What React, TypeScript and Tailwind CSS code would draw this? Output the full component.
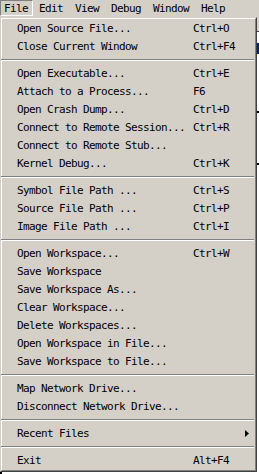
import React from 'react';

type Item = { label: string; shortcut?: string; submenu?: boolean } | 'sep';

const items: Item[] = [
  { label: 'Open Source File...', shortcut: 'Ctrl+O' },
  { label: 'Close Current Window', shortcut: 'Ctrl+F4' },
  'sep',
  { label: 'Open Executable...', shortcut: 'Ctrl+E' },
  { label: 'Attach to a Process...', shortcut: 'F6' },
  { label: 'Open Crash Dump...', shortcut: 'Ctrl+D' },
  { label: 'Connect to Remote Session...', shortcut: 'Ctrl+R' },
  { label: 'Connect to Remote Stub...' },
  { label: 'Kernel Debug...', shortcut: 'Ctrl+K' },
  'sep',
  { label: 'Symbol File Path ...', shortcut: 'Ctrl+S' },
  { label: 'Source File Path ...', shortcut: 'Ctrl+P' },
  { label: 'Image File Path ...', shortcut: 'Ctrl+I' },
  'sep',
  { label: 'Open Workspace...', shortcut: 'Ctrl+W' },
  { label: 'Save Workspace' },
  { label: 'Save Workspace As...' },
  { label: 'Clear Workspace...' },
  { label: 'Delete Workspaces...' },
  { label: 'Open Workspace in File...' },
  { label: 'Save Workspace to File...' },
  'sep',
  { label: 'Map Network Drive...' },
  { label: 'Disconnect Network Drive...' },
  'sep',
  { label: 'Recent Files', submenu: true },
  'sep',
  { label: 'Exit', shortcut: 'Alt+F4' },
];

const menus = ['Edit', 'View', 'Debug', 'Window', 'Help'];

export default function App() {
  return (
    <div className="w-[259px] h-[474px] overflow-hidden bg-white font-['DejaVu_Sans_Mono',monospace] text-[11px] tracking-[-0.62px] text-black leading-none">
      {/* Menu bar */}
      <div className="flex h-[17px] bg-[#d4d0c8]">
        <div className="flex items-center w-[33px] h-[16px] pl-[3px] border-t border-l border-r border-b border-t-[#808080] border-l-[#808080] border-r-white border-b-white">
          File
        </div>
        {menus.map((m) => (
          <div key={m} className="flex items-center h-[16px] px-[6px]">
            {m}
          </div>
        ))}
      </div>

      <div className="flex">
        {/* Dropdown */}
        <div className="w-[257px] h-[455px] bg-[#d4d0c8] border border-t-[#d4d0c8] border-l-[#d4d0c8] border-r-[#404040] border-b-[#404040]">
          <div className="h-full border border-t-white border-l-white border-r-[#808080] border-b-[#808080] pb-px">
            {items.map((it, i) =>
              it === 'sep' ? (
                <div key={i} className="h-[9px] pt-[4px] -ml-px mr-px">
                  <div className="h-[2px] border-t border-b border-t-[#808080] border-b-white" />
                </div>
              ) : (
                <div key={i} className="flex items-center h-[18px] pl-[15px]">
                  <span className="w-[176px] shrink-0 whitespace-nowrap">{it.label}</span>
                  {it.shortcut && <span className="whitespace-nowrap">{it.shortcut}</span>}
                  {it.submenu && (
                    <svg className="ml-[52px]" width="4" height="7" viewBox="0 0 4 7">
                      <path d="M0 0 L4 3.5 L0 7 Z" fill="#000" />
                    </svg>
                  )}
                </div>
              )
            )}
          </div>
        </div>

        {/* Window content peeking at the right */}
        <div className="w-[2px] h-[455px] flex flex-col">
          <div className="h-[14px] bg-[#d4d0c8]" />
          <div className="h-px bg-[#404040]" />
          <div className="h-[11px] bg-white" />
          <div className="h-[11px] bg-[#0a246a]" />
          <div className="h-[57px] bg-white" />
          <div className="h-[2px] bg-black" />
          <div className="h-[50px] bg-white" />
          <div className="h-[2px] bg-black" />
          <div className="flex-1 bg-white" />
        </div>
      </div>

      {/* Below the menu */}
      <div className="flex h-[2px] bg-white">
        <div className="w-[2px] bg-black" />
      </div>
    </div>
  );
}
